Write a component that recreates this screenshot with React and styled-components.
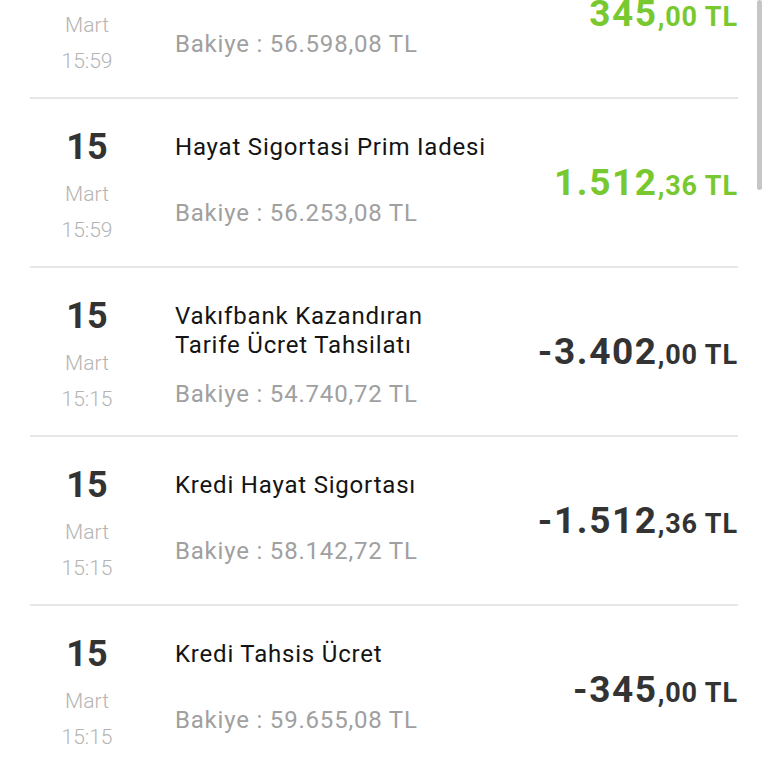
import React from "react";
import styled, { createGlobalStyle } from "styled-components";

const GlobalStyle = createGlobalStyle`
  html, body {
    margin: 0;
    padding: 0;
    background: #ffffff;
  }
  body {
    font-family: Roboto, "Noto Sans", "Liberation Sans", sans-serif;
    -webkit-font-smoothing: antialiased;
  }
`;

const Screen = styled.div`
  position: relative;
  width: 768px;
  height: 768px;
  overflow: hidden;
  background: #ffffff;
`;

// liste biraz asagi kaydirilmis halde
const List = styled.div`
  margin-top: -70px;
  padding: 0 30px;
`;

const Row = styled.div`
  display: flex;
  height: 169px;
  box-sizing: border-box;
  border-bottom: 2px solid #e7e7e7;
`;

const DateCol = styled.div`
  width: 114px;
  flex-shrink: 0;
  padding-top: 28px;
  text-align: center;
`;

const Day = styled.div`
  font-size: 36px;
  line-height: 40px;
  font-weight: 700;
  color: #333333;
`;

const Small = styled.div`
  font-size: 21px;
  line-height: 36px;
  font-weight: 300;
  color: #b4b4b4;
  margin-top: ${(p) => (p.$first ? "9px" : "0")};
`;

const Middle = styled.div`
  margin-left: 31px;
  padding-top: 34px;
  display: flex;
  flex-direction: column;
`;

const Title = styled.div`
  min-height: 46px;
  font-size: 24px;
  line-height: 29px;
  letter-spacing: 0.8px;
  color: #141414;
  white-space: pre-line;
`;

const Balance = styled.div`
  margin-top: 20px;
  font-size: 24px;
  line-height: 29px;
  letter-spacing: 0.8px;
  color: #a0a0a0;
`;

const Amount = styled.div`
  margin-left: auto;
  align-self: center;
  font-weight: 700;
  white-space: nowrap;
  color: ${(p) => (p.$positive ? "#78c82f" : "#333333")};
`;

const Whole = styled.span`
  font-size: 37px;
  letter-spacing: 1.6px;
`;

const Fraction = styled.span`
  font-size: 27px;
  letter-spacing: 0.9px;
`;

const ScrollThumb = styled.div`
  position: absolute;
  top: 0;
  right: 6px;
  width: 5px;
  height: 190px;
  border-radius: 3px;
  background: #c6c6c6;
`;

const transactions = [
  { id: 1, time: "15:59", title: "Kredi Tahsis Ücret İadesi", balance: "56.598,08", whole: "345", frac: ",00 TL", positive: true },
  { id: 2, time: "15:59", title: "Hayat Sigortasi Prim Iadesi", balance: "56.253,08", whole: "1.512", frac: ",36 TL", positive: true },
  { id: 3, time: "15:15", title: "Vakıfbank Kazandıran\nTarife Ücret Tahsilatı", balance: "54.740,72", whole: "-3.402", frac: ",00 TL", positive: false },
  { id: 4, time: "15:15", title: "Kredi Hayat Sigortası", balance: "58.142,72", whole: "-1.512", frac: ",36 TL", positive: false },
  { id: 5, time: "15:15", title: "Kredi Tahsis Ücret", balance: "59.655,08", whole: "-345", frac: ",00 TL", positive: false },
];

const App = () => {
  return (
    <Screen>
      <GlobalStyle />
      <List>
        {transactions.map((t) => (
          <Row key={t.id}>
            <DateCol>
              <Day>15</Day>
              <Small $first>Mart</Small>
              <Small>{t.time}</Small>
            </DateCol>
            <Middle>
              <Title>{t.title}</Title>
              <Balance>Bakiye : {t.balance} TL</Balance>
            </Middle>
            <Amount $positive={t.positive}>
              <Whole>{t.whole}</Whole>
              <Fraction>{t.frac}</Fraction>
            </Amount>
          </Row>
        ))}
      </List>
      <ScrollThumb />
    </Screen>
  );
};

export default App;
